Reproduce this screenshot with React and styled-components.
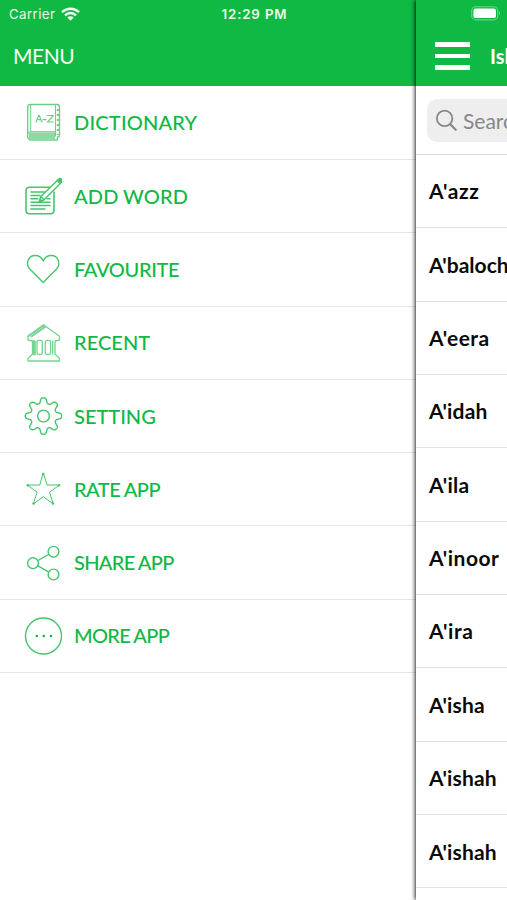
import React from "react";
import styled, { createGlobalStyle } from "styled-components";

const GREEN = "#10b844";

const GlobalStyle = createGlobalStyle`
  * { box-sizing: border-box; }
  html, body { margin: 0; background: #fff; overflow: hidden; }
`;

const Screen = styled.div`
  position: relative;
  display: flex;
  width: 507px;
  height: 900px;
  overflow: hidden;
  background: #fff;
  font-family: Lato, "Open Sans", sans-serif;
`;

const StatusBar = styled.div`
  position: absolute;
  z-index: 3;
  inset: 0 0 auto 0;
  height: 27px;
  padding: 0 5px 0 9px;
  display: grid;
  grid-template-columns: 1fr auto 1fr;
  align-items: center;
  color: #e9fbe9;
  font-family: Inter, sans-serif;
  font-size: 13.3px;
`;

const Carrier = styled.div`
  display: flex;
  align-items: center;
  gap: 6px;
  letter-spacing: 0.4px;
`;

const Clock = styled.div`
  margin-left: -2px;
  font-weight: 600;
  letter-spacing: 0.85px;
  white-space: nowrap;
`;

const BatterySlot = styled.div`
  display: flex;
  justify-content: flex-end;
`;

const Drawer = styled.nav`
  width: 416px;
  flex: none;
`;

const Header = styled.header`
  height: 86px;
  padding: 26px 0 0 13px;
  display: flex;
  align-items: center;
  background: ${GREEN};
  color: #f2fff2;
`;

const DrawerTitle = styled.h1`
  margin: 0;
  font-size: 21px;
  line-height: 26px;
  font-weight: 400;
  letter-spacing: ${(p) => p.$spacing}px;
`;

const MenuList = styled.div`
  padding-top: 0.7px;
`;

const MenuRow = styled.div`
  height: 73.3px;
  padding-left: 24px;
  display: flex;
  align-items: center;
  gap: 12px;
  border-bottom: 1px solid #e6e6e6;
  color: ${GREEN};
`;

const IconBox = styled.svg`
  width: 38px;
  height: 40px;
  flex: none;
  fill: none;
  stroke: #45c66c;
  stroke-width: 1.4;
  stroke-linejoin: round;
  stroke-linecap: round;
`;

const Label = styled.span`
  font-size: 20px;
  font-weight: 500;
  line-height: 26px;
  padding-bottom: 1px;
  white-space: nowrap;
  word-spacing: -0.4px;
  letter-spacing: ${(p) => p.$spacing}px;
`;

const Panel = styled.main`
  position: relative;
  z-index: 1;
  width: 91px;
  flex: none;
  background: #fff;
  box-shadow: -1px 0 4px rgba(0, 0, 0, 0.85);
`;

const PanelHeader = styled(Header)`
  padding-left: 19px;
  gap: 20px;
  overflow: hidden;
`;

const Burger = styled.div`
  width: 35px;
  height: 28px;
  flex: none;
  display: flex;
  flex-direction: column;
  justify-content: space-between;
`;

const BurgerBar = styled.span`
  height: 4.6px;
  background: #fff;
`;

const PanelTitle = styled.h2`
  margin: 0;
  color: #fff;
  font-size: 20px;
  font-weight: 700;
  white-space: nowrap;
`;

const SearchArea = styled.div`
  height: 69px;
  padding: 12.5px 0 0 11px;
  border-bottom: 1px solid #d9d9d9;
  overflow: hidden;
`;

const SearchField = styled.div`
  width: 300px;
  height: 43.5px;
  padding-left: 8px;
  display: flex;
  align-items: center;
  gap: 5px;
  border-radius: 10px;
  background: #eeeeef;
  color: #87878b;
  font-size: 21px;
`;

const WordRow = styled.div`
  height: 73.35px;
  padding: 0.5px 0 0 13px;
  display: flex;
  align-items: center;
  overflow: hidden;
  border-bottom: 1px solid #e3e3e3;
  color: #0a0a0a;
`;

const Word = styled.span`
  font-size: 21px;
  line-height: 26px;
  font-weight: 700;
  white-space: nowrap;
  letter-spacing: ${(p) => p.$spacing}px;
`;

const WifiIcon = () => (
  <svg width="19" height="14" viewBox="0 0 19 14" fill="none" stroke="#f2fff2" strokeWidth="2.5">
    <path d="M1 5.1a12.2 12.2 0 0 1 17 0M4 8.3a8 8 0 0 1 11 0" />
    <path d="M6.3 10.6a4.5 4.5 0 0 1 6.4 0L9.5 13.8z" fill="#f2fff2" stroke="none" />
  </svg>
);

const BatteryIcon = () => (
  <svg width="31" height="15" viewBox="0 0 31 15">
    <rect x="0.7" y="0.7" width="26" height="13.2" rx="4" fill="none" stroke="#6bd386" strokeWidth="1.1" />
    <rect x="2.4" y="2.5" width="22.6" height="9.6" rx="2.2" fill="#fff" />
    <path d="M28 5.1q2 2.2 0 4.4z" fill="#78d88f" />
  </svg>
);

const SearchIcon = () => (
  <svg width="23" height="23" viewBox="0 0 23 23" fill="none" stroke="#87878b" strokeWidth="1.8" strokeLinecap="round">
    <circle cx="9.6" cy="9.4" r="7.7" />
    <path d="M15.2 15.2l5.5 5.5" strokeWidth="2.2" />
  </svg>
);

const DictionaryIcon = () => (
  <g stroke="#6bcf8a">
    <path d="M6 1.5h27q2.500 0 2.500 2.500v28q0 2-2 2l-.3 3H6q-2.300-2.300-2.300-2.300V4q0-2.500 2.300-2.500z" />
    <path d="M6.700 2v26.500M31.500 2v27M4 30q1-1.300 3-1.300h24.500v4.500" strokeWidth="1" />
    <rect x="5" y="29.300" width="26" height="7.200" fill="#8cdba4" stroke="none" />
    <path d="M34 6v26" strokeWidth="2.600" strokeDasharray="2 3" strokeLinecap="butt" />
    <path d="M12 19l3-7 3 7M13 16.700h4M19 16.700h3M23.500 12.500h6l-6 6.500h6" strokeWidth="1.200" />
  </g>
);

const AddWordIcon = () => (
  <>
    <path d="M26 11.200H5.500q-3.500 0-3.500 3.500v19.500q0 3.500 3.500 3.500h21q3.500 0 3.500-3.500V16" strokeWidth="1.600" />
    <path d="M7 16h14M7 19.400h9M7 22.800h7M23 22.800h3M7 26.200h19M7 29.600h19M7 33h14" strokeWidth="1.500" />
    <path d="M15.200 26l1.500-5.200L34.500 3.200q1.400-1.400 3 0t0 3L19.800 24zM17.200 21l2.500 2.500M33 4.600l3 3" fill="#fff" strokeWidth="1.400" />
    <path d="M15.200 26l1-3.300 2.300 2.100zM34.500 3.200q1.400-1.400 3 0t0 3l-1.200 1.100-3-3z" fill="#45c66c" strokeWidth=".7" />
  </>
);

const HeartIcon = () => (
  <path d="M19.200 33.500L5.600 19.800C1.500 14.800 4 6.500 11.200 6.500c4 0 6.500 2.200 8 5.500 1.500-3.300 4-5.500 8-5.500 7.200 0 9.700 8.300 5.600 13.300z" />
);

const RecentIcon = () => (
  <g stroke="#78d493" strokeWidth="1.350">
    <path d="M19.500 1.700L4 13.300v3.700l4.500 1v13L4 35.500V38h31.500v-2.500L31 31V18l4.500-1v-3.700z" />
    <path d="M4.500 13L19.500 2.500 21 4 7.500 13.500" strokeWidth="1.800" />
    <path d="M10.300 18.500v12.500" strokeWidth="3" />
    <rect x="13" y="17.300" width="5.300" height="14.200" rx="1.800" />
    <rect x="21.300" y="17.300" width="5.300" height="14.200" rx="1.800" />
    <path d="M28.700 18v13" />
  </g>
);

const gearPath = (() => {
  const points = [];
  for (let i = 0; i < 320; i += 1) {
    const a = (i / 320) * Math.PI * 2;
    const r = 15.6 + 2.9 * Math.tanh(1.5 * Math.cos(8 * a));
    points.push(`${(19.5 + r * Math.cos(a)).toFixed(2)} ${(20 + r * Math.sin(a)).toFixed(2)}`);
  }
  return `M${points.join("L")}Z`;
})();

const GearIcon = () => (
  <>
    <path d={gearPath} />
    <circle cx="19.500" cy="20" r="5.900" />
  </>
);

const StarIcon = () => (
  <>
    <path d="M19.300 4.300L23.200 16h12.300l-10 7.200L29.300 35l-10-7.300L9.300 35l3.800-11.800L3.200 16h12.200z" strokeWidth="1" />
    <g fill="#45c66c" stroke="none">
      <circle cx="19.300" cy="5" r="1.200" /><circle cx="35" cy="16.200" r="1.200" /><circle cx="29" cy="34.500" r="1.200" />
      <circle cx="9.500" cy="34.500" r="1.200" /><circle cx="3.800" cy="16.200" r="1.200" />
    </g>
  </>
);

const ShareIcon = () => (
  <>
    <circle cx="9" cy="20.200" r="5.400" />
    <circle cx="29.500" cy="8.800" r="5.400" />
    <circle cx="29.500" cy="31.500" r="5.400" />
    <path d="M14 17.500l10.500-6M14 22.900l10.500 6" />
  </>
);

const MoreIcon = () => (
  <>
    <circle cx="19.500" cy="20" r="18" />
    <g fill="#10b844" stroke="none">
      <circle cx="12.800" cy="20" r="1.300" /><circle cx="19.800" cy="20" r="1.300" /><circle cx="27" cy="20" r="1.300" />
    </g>
  </>
);

const MENU = [
  { label: "DICTIONARY", icon: DictionaryIcon, spacing: 0.2 },
  { label: "ADD WORD", icon: AddWordIcon, spacing: 0.15 },
  { label: "FAVOURITE", icon: HeartIcon, spacing: -0.35 },
  { label: "RECENT", icon: RecentIcon, spacing: 0.05 },
  { label: "SETTING", icon: GearIcon, spacing: 0 },
  { label: "RATE APP", icon: StarIcon, spacing: -0.5 },
  { label: "SHARE APP", icon: ShareIcon, spacing: -0.68 },
  { label: "MORE APP", icon: MoreIcon, spacing: -0.7 },
];

const WORDS = [
  { text: "A'azz", spacing: 0.6 },
  { text: "A'baloch", spacing: 0 },
  { text: "A'eera", spacing: 0.4 },
  { text: "A'idah", spacing: 0.15 },
  { text: "A'ila", spacing: 0.3 },
  { text: "A'inoor", spacing: 0.5 },
  { text: "A'ira", spacing: 0.6 },
  { text: "A'isha", spacing: 0.15 },
  { text: "A'ishah", spacing: 0.15 },
  { text: "A'ishah", spacing: 0.15 },
];

export default function App() {
  return (
    <>
      <GlobalStyle />
      <Screen>
        <StatusBar>
          <Carrier>Carrier <WifiIcon /></Carrier>
          <Clock>12:29 PM</Clock>
          <BatterySlot><BatteryIcon /></BatterySlot>
        </StatusBar>
        <Drawer>
          <Header><DrawerTitle $spacing={-0.5}>MENU</DrawerTitle></Header>
          <MenuList>
            {MENU.map(({ label, icon: Icon, spacing }) => (
              <MenuRow key={label}>
                <IconBox viewBox="0 0 38 40"><Icon /></IconBox>
                <Label $spacing={spacing}>{label}</Label>
              </MenuRow>
            ))}
          </MenuList>
        </Drawer>
        <Panel>
          <PanelHeader>
            <Burger><BurgerBar /><BurgerBar /><BurgerBar /></Burger>
            <PanelTitle>Isl</PanelTitle>
          </PanelHeader>
          <SearchArea><SearchField><SearchIcon />Search</SearchField></SearchArea>
          {WORDS.map(({ text, spacing }, i) => (
            <WordRow key={i}><Word $spacing={spacing}>{text}</Word></WordRow>
          ))}
        </Panel>
      </Screen>
    </>
  );
}
